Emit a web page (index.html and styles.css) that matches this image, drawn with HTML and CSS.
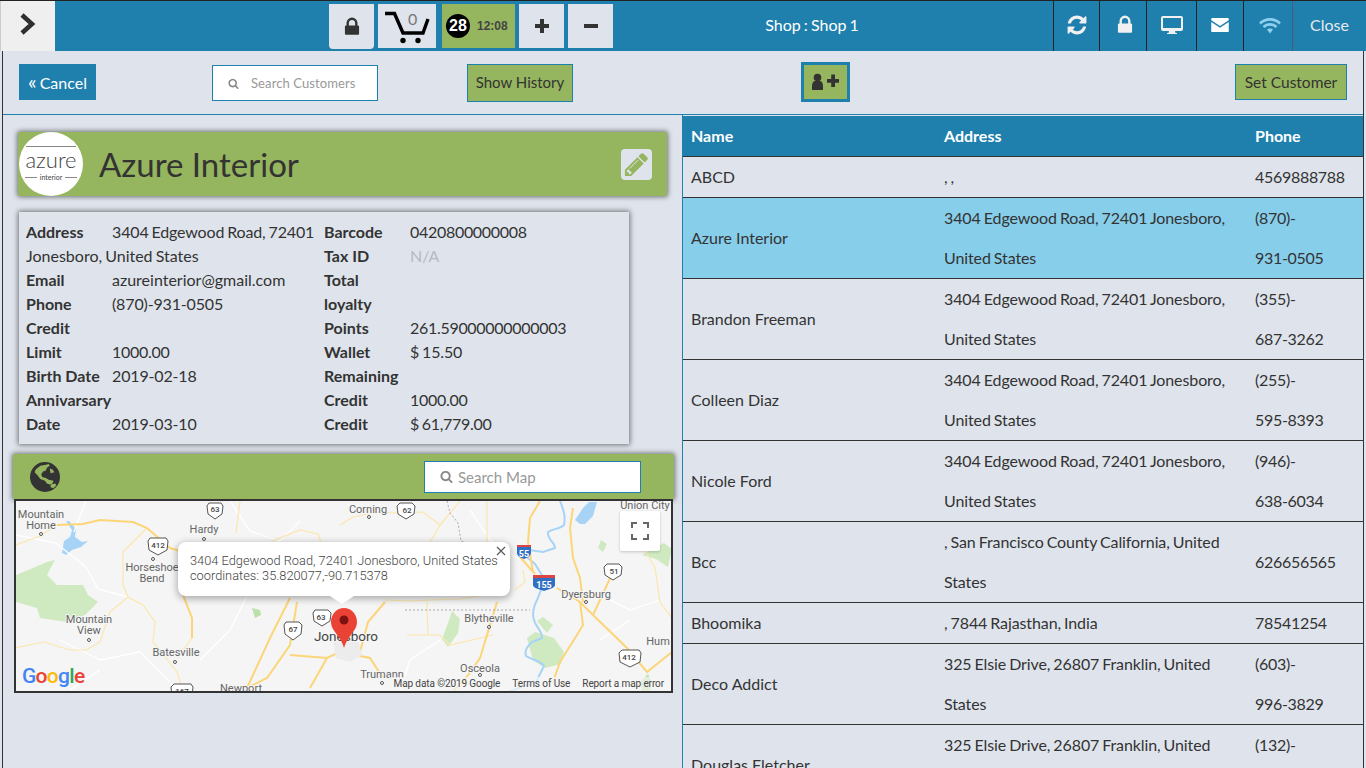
FILE: index.html
```html
<!DOCTYPE html>
<html lang="en">
<head>
  <meta charset="UTF-8" />
  <title>Shop 1</title>
  <link rel="stylesheet" href="styles.css">
</head>
<body>
  <header class="topbar">
    <button class="toggle">
      <svg width="18" height="24" viewBox="0 0 18 24"><path d="M3 3l10 9-10 9" fill="none" stroke="#2f2f2f" stroke-width="4.5"/></svg>
    </button>
    <div class="tools">
      <div class="tool tool-lock">
        <svg class="ico" width="22" height="22" viewBox="0 0 1792 1792"><path fill="#333" d="M640 768h512v-192q0-106-75-181t-181-75-181 75-75 181v192zm832 96v576q0 40-28 68t-68 28h-960q-40 0-68-28t-28-68v-576q0-40 28-68t68-28h32v-192q0-184 132-316t316-132 316 132 132 316v192h32q40 0 68 28t28 68z"/></svg>
      </div>
      <div class="tool tool-cart">
        <svg width="50" height="42" viewBox="0 0 50 42">
          <path d="M3 8.500h9.500L21 28h20l5-14" fill="none" stroke="#000" stroke-width="3.400"/>
          <circle cx="21" cy="35.500" r="2.700" fill="#000"/><circle cx="36" cy="35.500" r="2.700" fill="#000"/>
        </svg>
        <span class="cart-count">0</span>
      </div>
      <div class="tool tool-timer"><span class="badge">28</span><span class="clock">12:08</span></div>
      <div class="tool tool-step">
        <svg width="16" height="16" viewBox="0 0 16 16"><path d="M6 1h4v5h5v4h-5v5H6v-5H1V6h5z" fill="#333"/></svg>
      </div>
      <div class="tool tool-step">
        <svg width="16" height="16" viewBox="0 0 16 16"><path d="M1 6h14v4H1z" fill="#333"/></svg>
      </div>
    </div>
    <div class="shop-name">Shop : Shop 1</div>
    <div class="status">
      <div class="status-cell w46">
        <svg width="22" height="22" viewBox="0 0 1792 1792"><path fill="#f0f0f0" d="M1639 1056q0 5-1 7-64 268-268 434.5t-478 166.5q-146 0-282.5-55t-243.5-157l-129 129q-19 19-45 19t-45-19-19-45v-448q0-26 19-45t45-19h448q26 0 45 19t19 45-19 45l-137 137q71 66 161 102t187 36q134 0 250-65t186-179q11-17 53-117 8-23 30-23h192q13 0 22.5 9.5t9.5 22.5zm25-800v448q0 26-19 45t-45 19h-448q-26 0-45-19t-19-45 19-45l138-138q-148-137-349-137-134 0-250 65t-186 179q-11 17-53 117-8 23-30 23h-199q-13 0-22.5-9.5t-9.5-22.5v-7q65-268 270-434.5t480-166.5q146 0 284 55.5t245 156.5l130-129q19-19 45-19t45 19 19 45z"/></svg>
      </div>
      <div class="status-cell w47 nudge">
        <svg width="22" height="22" viewBox="0 0 1792 1792"><path fill="#f0f0f0" d="M640 768h512v-192q0-106-75-181t-181-75-181 75-75 181v192zm832 96v576q0 40-28 68t-68 28h-960q-40 0-68-28t-28-68v-576q0-40 28-68t68-28h32v-192q0-184 132-316t316-132 316 132 132 316v192h32q40 0 68 28t28 68z"/></svg>
      </div>
      <div class="status-cell w50">
        <svg width="22" height="18" viewBox="0 0 22 18"><path fill="#f0f0f0" d="M2 0h18a2 2 0 0 1 2 2v11a2 2 0 0 1-2 2h-6l.5 2H16v1H6v-1h1.500L8 15H2a2 2 0 0 1-2-2V2a2 2 0 0 1 2-2zm0 2v10h18V2z"/></svg>
      </div>
      <div class="status-cell w47">
        <svg width="18" height="14" viewBox="0 0 20 16"><path fill="#fff" d="M1 0h18a1 1 0 0 1 1 1v1.600l-10 6.600L0 2.600V1a1 1 0 0 1 1-1zM0 4.600l10 6.600 10-6.600V15a1 1 0 0 1-1 1H1a1 1 0 0 1-1-1z"/></svg>
      </div>
      <div class="status-cell w49 nudge-small">
        <svg width="22" height="17" viewBox="0 0 22 17"><path fill="none" stroke="#8fd0ee" stroke-width="2.600" d="M1 6.500c5.500-5.500 14.500-5.500 20 0M4.500 10c3.500-3.500 9.500-3.500 13 0"/><path fill="#8fd0ee" d="M8 12.500c1.700-1.500 4.300-1.500 6 0l-3 4z"/></svg>
      </div>
      <div class="status-cell close">Close</div>
    </div>
  </header>

  <main class="screen">
    <div class="toolbar">
      <button class="btn btn-cancel"><span class="chev">«</span>Cancel</button>
      <label class="search search-customers">
        <svg width="11" height="11" viewBox="0 0 1792 1792"><path fill="#888" d="M1216 832q0-185-131.500-316.500t-316.500-131.500-316.500 131.500-131.500 316.500 131.500 316.500 316.500 131.500 316.500-131.500 131.500-316.500zm512 832q0 52-38 90t-90 38q-54 0-90-38l-343-342q-179 124-399 124-143 0-273.500-55.500t-225-150-150-225-55.500-273.500 55.500-273.500 150-225 225-150 273.500-55.500 273.500 55.500 225 150 150 225 55.500 273.500q0 220-124 399l343 343q37 37 37 90z"/></svg>
        <span>Search Customers</span>
      </label>
      <button class="btn btn-green btn-history">Show History</button>
      <button class="btn-add">
        <svg width="28" height="18" viewBox="0 0 28 18"><circle cx="5.500" cy="4.500" r="3.800" fill="#333"/><path d="M0 17v-4c0-3 1.500-5 3-5h5c1.500 0 3 2 3 5v4z" fill="#333"/><path d="M15 6h4.200V1.500h3.800V6H27v3.800h-4V14h-3.800V9.800H15z" fill="#333"/></svg>
      </button>
      <button class="btn btn-green btn-set">Set Customer</button>
    </div>

    <div class="columns">
      <section class="detail">
        <div class="partner-head">
          <div class="logo">
            <div class="logo-rule"></div>
            <div class="logo-name">azure</div>
            <div class="logo-sub">interior</div>
          </div>
          <h1>Azure Interior</h1>
          <div class="edit">
            <svg width="27" height="27" viewBox="0 0 1792 1792"><path fill="#95b55e" d="M491 1536l91-91-235-235-91 91v107h128v128h107zm523-928q0-22-22-22-10 0-17 7l-542 542q-7 7-7 17 0 22 22 22 10 0 17-7l542-542q7-7 7-17zm-54-192l416 416-832 832h-416v-416zm683 96q0 53-37 90l-166 166-416-416 166-165q36-38 90-38 53 0 91 38l235 234q37 39 37 91z"/></svg>
          </div>
        </div>

        <div class="info-card">
          <div class="info-col">
            <div class="line"><b>Address</b><span class="d">3404 Edgewood Road, 72401</span></div>
            <div class="line">Jonesboro, United States</div>
            <div class="line"><b>Email</b>azureinterior@gmail.com</div>
            <div class="line"><b>Phone</b><span class="d">(870)-931-0505</span></div>
            <div class="line"><b>Credit</b></div>
            <div class="line"><b>Limit</b><span class="n">1000.00</span></div>
            <div class="line"><b>Birth Date</b><span class="d">2019-02-18</span></div>
            <div class="line"><b>Annivarsary</b></div>
            <div class="line"><b>Date</b><span class="d">2019-03-10</span></div>
          </div>
          <div class="info-col">
            <div class="line"><b>Barcode</b><span class="n">0420800000008</span></div>
            <div class="line"><b>Tax ID</b><span class="na">N/A</span></div>
            <div class="line"><b>Total</b></div>
            <div class="line"><b>loyalty</b></div>
            <div class="line"><b>Points</b><span class="n">261.59000000000003</span></div>
            <div class="line"><b>Wallet</b><span class="d">$ 15.50</span></div>
            <div class="line"><b>Remaining</b></div>
            <div class="line"><b>Credit</b><span class="n">1000.00</span></div>
            <div class="line"><b>Credit</b><span class="n">$ 61,779.00</span></div>
          </div>
        </div>

        <div class="map-head">
          <svg class="globe" width="30" height="30" viewBox="0 0 32 32">
            <circle cx="16" cy="16" r="16" fill="#333"/>
            <path fill="#95b55e" d="M6 8l5-4 6-1 4 1-3 2-1 3-3 1-2 3 1 3 4 1 3 2 5 1-1 3-3 1-3-1-2-3-5-2-3-4-3-3zM22 24l5-1 1 2-3 3-3-1zM21 7l3 1 2 3-4 1zM17 3l3-1 1 2-3 1z"/>
          </svg>
          <label class="search search-map">
            <svg width="13" height="13" viewBox="0 0 1792 1792"><path fill="#888" d="M1216 832q0-185-131.500-316.500t-316.500-131.500-316.500 131.500-131.500 316.500 131.500 316.500 316.500 131.500 316.500-131.500 131.500-316.500zm512 832q0 52-38 90t-90 38q-54 0-90-38l-343-342q-179 124-399 124-143 0-273.500-55.500t-225-150-150-225-55.500-273.500 55.500-273.500 150-225 225-150 273.500-55.500 273.500 55.500 225 150 150 225 55.500 273.500q0 220-124 399l343 343q37 37 37 90z"/></svg>
            <span>Search Map</span>
          </label>
        </div>

        <div class="map">
          <svg class="map-svg" width="655" height="190" viewBox="16 501 655 190">
            <rect x="16" y="501" width="656" height="190" fill="#f5f5f5"/>
            <!-- parks -->
            <path fill="#cfeac1" d="M16 575l17-7 14-6 8-2-8 15 10 10h26l5 10 10 7-13 13-18 7-27-4-3-10-21-6z"/>
            <path fill="#cfeac1" d="M535 632l-8 6 6 22 12 8 16-4 3-12-10-14zM543 617l-6 4 10 12 6-8zM452 611l-4 12-6 16 6 8 10-14 2-14zM642 555l22-12 8 6-4 18-12-8zM601 540l-3 8 5 4 4-8z"/>
            <path fill="#bbe0a9" d="M252 608l8 2 1 5-6 3zM640 682l8-8 4 10-2 7h-8z"/>
            <!-- water -->
            <path fill="#a7d3f7" d="M62 553l2-12 6-4 2-7-6-9 3 0 7 8-1 8 7 5 6-1-7 6-9 3-6 5zM575 520l8-12 6-6h8l-4 14-8 8-5 0z"/>
            <path fill="none" stroke="#a7d3f7" stroke-width="2" d="M560 501c3 8 6 14 4 24-4 4-12 4-16 7-1 8 7 10 7 16l-12 4-14-2-10 0c6 6 12 10 16 14l10 16-8 20c-4 8-5 14-3 20 2 8 8 10 8 18l-10 4c-4 4-8 8-6 14 6 4 14 4 18 10l-8 16-12 4-16 6-16 4-14 6-10 0"/>
            <!-- minor roads -->
            <g fill="none" stroke="#fff" stroke-width="1.300">
              <path d="M16 535l40 8 30 24 12 22 30 8M86 500l-12 32M60 640l40 20 40-8 30 30M200 660l30-30 20-40M440 640l-30 20-10 30M470 510l20 30 30 20M590 590l40 20 30-10M600 640l30-20M230 501l20 30 30 10 20-20M100 670l-30 20"/>
            </g>
            <!-- state and county roads -->
            <g fill="none" stroke="#fde6ad" stroke-width="1.200">
              <path d="M16 545l24-9 17-11M147 528l-24 24v33l5 12 15 8 12 17-2 20 24 30 6 18M128 597l-18 15-10 30-14 8-16 0-26-8-30 6M183 595l9 23v20l-15 20M407 635h33l10 10 43-10M427 602l1 33M353 517l24-5 20 1 26-1 17 13-10 17M440 525l20-24M487 501v41M340 525l13-8M240 501l-4 32M270 542l30-12 18 4 7 20M640 542l15 26 5 34 12 16M385 600l25 1 20-1 30-1 30-5 20-8M515 590l10-8-2-12"/>
            </g>
            <!-- highways -->
            <g fill="none" stroke="#fdd579" stroke-width="2">
              <path d="M57 525l26-1 17-4 33 2 14 6 23 20 10 3M183 595l9 23v20M290 598l-20 40-23 50M297 602l-7 43-23 33-20 10M290 655l37 3 13-6M327 658l-17 30M340 652l30 6 13 20M385 602l-17 20-8 30M497 602l-10 33-7 23-17 24-10 9M540 501l-10 17-2 24 5 30M520 557l15 17M557 588l23 14 13 13 34 33 20 24 25-20M580 602l3 23-6 10-17 27-7 20M573 508l-3 20 3 30 7 20 3 24M613 572l-20 43"/>
            </g>
            <path fill="none" stroke="#888" stroke-width="0.700" stroke-dasharray="2 2" d="M405 610h125M447 501l3 12 8 10 3 18 10 4"/>
            <!-- city blocks -->
            <path fill="#ececec" d="M333 642l16-4 10 5 3 12-12 7-14-4z"/>
            <!-- shields -->
            <g class="shield"><path d="M209 503h12l2 3-1 8-7 5-7-5-1-8z"/><text x="215" y="512">63</text></g>
            <g class="shield"><path d="M150 538h16l2 3-1 9-9 5-9-5-1-9z"/><text x="158" y="548">412</text></g>
            <g class="shield"><path d="M400 503h12l3 3-1 8-8 5-8-5-1-8z"/><text x="407" y="513">62</text></g>
            <g class="shield"><path d="M286 622h13l3 3-1 9-8 6-8-6-1-9z"/><text x="293" y="632">67</text></g>
            <g class="shield"><path d="M315 610h13l3 3-1 8-8 5-8-5-1-8z"/><text x="321" y="620">63</text></g>
            <g class="shield"><path d="M607 564h12l3 3-1 8-8 5-8-5-1-8z"/><text x="614" y="574">51</text></g>
            <g class="shield"><path d="M622 650h17l2 3-1 9-10 5-10-5-1-9z"/><text x="629" y="660">412</text></g>
            <g class="shield"><path d="M174 684h17l2 3-1 9-10 5-10-5-1-9z"/><text x="182" y="694">167</text></g>
            <g class="shield-i">
              <path fill="#2f6fc4" d="M517 546h14v7c0 3-4 5-7 6-3-1-7-3-7-6z"/><path fill="#d44" d="M517 545h14v2h-14z"/>
              <text x="524" y="557">55</text>
              <path fill="#2f6fc4" d="M533 576h22v9c0 3-6 4-11 6-5-2-11-3-11-6z"/><path fill="#d44" d="M533 575h22v3h-22z"/>
              <text x="544" y="588">155</text>
            </g>
            <!-- towns -->
            <g class="town">
              <text x="41" y="518">Mountain</text><text x="41" y="529">Home</text>
              <text x="204" y="533">Hardy</text>
              <text x="152" y="571">Horseshoe</text><text x="152" y="582">Bend</text>
              <text x="89" y="623">Mountain</text><text x="89" y="634">View</text>
              <text x="176" y="656">Batesville</text>
              <text x="241" y="692">Newport</text>
              <text x="297" y="550">Pocahontas</text>
              <text x="368" y="513">Corning</text>
              <text x="645" y="509">Union City</text>
              <text x="586" y="598">Dyersburg</text>
              <text x="489" y="622">Blytheville</text>
              <text x="480" y="672">Osceola</text>
              <text x="382" y="678">Trumann</text>
              <text x="658" y="645">Hum</text>
            </g>
            <text class="town-big" x="346" y="641">Jonesboro</text>
            <g fill="#fff" stroke="#555" stroke-width="1">
              <circle cx="41" cy="534" r="1.500"/><circle cx="204" cy="539" r="1.500"/><circle cx="153" cy="559" r="1.500"/><circle cx="89" cy="640" r="1.500"/><circle cx="175" cy="662" r="1.500"/><circle cx="369" cy="517" r="1.500"/><circle cx="586" cy="602" r="1.500"/><circle cx="489" cy="627" r="1.500"/><circle cx="480" cy="675" r="1.500"/><circle cx="382" cy="683" r="1.500"/>
            </g>
            <!-- pin -->
            <path fill="#ea4335" d="M344 648c-2-7-5-10-9-16-3-4-4-7-4-10 0-8 6-14 13-14s13 6 13 14c0 3-1 6-4 10-4 6-7 9-9 16z"/>
            <circle cx="344" cy="620" r="4.500" fill="#7d1212"/>
          </svg>

          <button class="fullscreen">
            <svg width="18" height="18" viewBox="0 0 18 18"><path d="M0 6V0h6v2H2v4zM12 0h6v6h-2V2h-4zM18 12v6h-6v-2h4v-4zM6 18H0v-6h2v4h4z" fill="#666"/></svg>
          </button>

          <div class="popup">
            <div>3404 Edgewood Road, 72401 Jonesboro, United States</div>
            <div>coordinates: 35.820077,-90.715378</div>
            <svg class="popup-close" width="10" height="10" viewBox="0 0 10 10"><path d="M1 1l8 8M9 1L1 9" stroke="#555" stroke-width="1.100"/></svg>
          </div>

          <div class="google"><i class="g-b">G</i><i class="g-r">o</i><i class="g-y">o</i><i class="g-b">g</i><i class="g-g">l</i><i class="g-r">e</i></div>
          <div class="attrib"><span>Map data ©2019 Google</span><span>Terms of Use</span><span>Report a map error</span></div>
        </div>
      </section>

      <section class="customers">
        <table>
          <thead>
            <tr><th class="c-name">Name</th><th class="c-addr">Address</th><th class="c-phone">Phone</th></tr>
          </thead>
          <tbody>
            <tr><td>ABCD</td><td>, ,</td><td>4569888788</td></tr>
            <tr class="selected"><td>Azure Interior</td><td>3404 Edgewood Road, 72401 Jonesboro, United States</td><td>(870)-<br>931-0505</td></tr>
            <tr><td>Brandon Freeman</td><td>3404 Edgewood Road, 72401 Jonesboro, United States</td><td>(355)-<br>687-3262</td></tr>
            <tr><td>Colleen Diaz</td><td>3404 Edgewood Road, 72401 Jonesboro, United States</td><td>(255)-<br>595-8393</td></tr>
            <tr><td>Nicole Ford</td><td>3404 Edgewood Road, 72401 Jonesboro, United States</td><td>(946)-<br>638-6034</td></tr>
            <tr><td>Bcc</td><td>, San Francisco County California, United States</td><td>626656565</td></tr>
            <tr><td>Bhoomika</td><td>, 7844 Rajasthan, India</td><td>78541254</td></tr>
            <tr><td>Deco Addict</td><td>325 Elsie Drive, 26807 Franklin, United States</td><td>(603)-<br>996-3829</td></tr>
            <tr><td>Douglas Fletcher</td><td>325 Elsie Drive, 26807 Franklin, United States</td><td>(132)-<br>553-7242</td></tr>
          </tbody>
        </table>
      </section>
    </div>
  </main>
</body>
</html>
```

FILE: styles.css
```css
* {
  box-sizing: border-box;
}
html, body {
  height: 100%;
}
body {
  margin: 0;
  overflow: hidden;
  font-family: Lato, sans-serif;
  font-size: 16px;
  color: #333;
  background: #dfe4ec;
}
button {
  font-family: inherit;
  cursor: pointer;
}

/* top bar */
.topbar {
  display: flex;
  align-items: stretch;
  height: 51px;
  background: #1f80ae;
  border-top: 1px solid #222;
}
.toggle {
  width: 55px;
  padding: 0 0 2px;
  background: #efefef;
  border: 0;
  border-left: 1px solid #ccc;
}
.tools {
  display: flex;
  gap: 4px;
  margin-left: 274px;
  padding-top: 3px;
}
.tool {
  display: flex;
  align-items: center;
  justify-content: center;
  height: 44px;
  background: #dfe4ec;
}
.tool-lock {
  width: 45px;
  height: 45px;
  border-radius: 0 0 4px 4px;
}
.tool-cart {
  position: relative;
  width: 58px;
}
.cart-count {
  position: absolute;
  top: 5px;
  left: 30px;
  color: #777;
  font-size: 16px;
}
.tool-timer {
  width: 73px;
  margin-left: 2px;
  gap: 7px;
  justify-content: flex-start;
  padding-left: 4px;
  background: #95b55e;
}
.badge {
  width: 24px;
  height: 24px;
  border-radius: 50%;
  background: #000;
  color: #fff;
  font-family: "Liberation Sans", sans-serif;
  font-size: 16px;
  font-weight: bold;
  line-height: 24px;
  text-align: center;
}
.clock {
  font-family: "Liberation Sans", sans-serif;
  font-size: 12px;
  font-weight: bold;
  color: #444;
}
.tool-step {
  width: 45px;
}
.shop-name {
  width: 398px;
  color: #fff;
  text-align: center;
  line-height: 47px;
  word-spacing: -1px;
}
.status {
  display: flex;
  margin-left: auto;
  color: #fff;
}
.status-cell {
  display: flex;
  align-items: center;
  justify-content: center;
  padding-bottom: 2px;
  border-left: 1px solid #222;
}
.w46 { width: 46px; }
.w47 { width: 47px; }
.w50 { width: 50px; }
.w49 { width: 49px; }
.nudge {
  padding-left: 4px;
}
.nudge-small {
  padding-left: 3px;
}
.close {
  width: 74px;
  padding-bottom: 4px;
  color: #e6e9ee;
  font-size: 16px;
  border-left-color: #4a5a78;
}

/* toolbar */
.screen {
  height: 717px;
  overflow: hidden;
  border-left: 1px solid #333;
  margin-left: 2px;
  margin-right: 2px;
  border-right: 1px solid #333;
}
.toolbar {
  display: flex;
  align-items: flex-start;
  height: 64px;
  padding: 13px 16px 0 16px;
  border-bottom: 1px solid #1f80ae;
}
.btn {
  height: 36px;
  padding: 0;
  border: 1px solid #1f80ae;
  font-size: 15px;
  color: #333;
}
.btn-cancel {
  width: 77px;
  background: #1f80ae;
  color: #fff;
  font-size: 16px;
}
.chev {
  margin-right: 3px;
  font-size: 20px;
  line-height: 16px;
}
.search {
  display: flex;
  align-items: center;
  background: #fff;
  border: 1px solid #1f80ae;
  color: #999;
}
.search-customers {
  width: 166px;
  height: 36px;
  margin: 1px 0 0 116px;
  padding-left: 15px;
  gap: 12px;
  font-size: 13px;
  letter-spacing: 0.1px;
}
.btn-green {
  background: #95b55e;
}
.btn-history {
  width: 106px;
  height: 38px;
  margin-left: 89px;
  padding-bottom: 2px;
}
.btn-add {
  display: flex;
  align-items: center;
  justify-content: center;
  width: 49px;
  height: 40px;
  margin: -2px 0 0 228px;
  padding: 0;
  background: #95b55e;
  border: 3px solid #1f80ae;
}
.btn-set {
  width: 112px;
  margin-left: auto;
  font-size: 15.500px;
}

/* columns */
.columns {
  display: flex;
  align-items: flex-start;
}
.detail {
  width: 679px;
  padding: 17px 0 0 10px;
}
.partner-head {
  display: flex;
  align-items: center;
  width: 649px;
  height: 64px;
  margin-left: 5px;
  background: #95b55e;
  border-radius: 2px;
  box-shadow: 0 0 5px 1px rgba(0, 0, 0, 0.5);
}
.logo {
  display: flex;
  flex-direction: column;
  align-items: center;
  justify-content: center;
  width: 64px;
  height: 64px;
  margin-left: 1px;
  border-radius: 50%;
  background: #fff;
  color: #444;
}
.logo-rule {
  width: 50px;
  border-top: 1px solid #888;
}
.logo-name {
  font-size: 22px;
  font-weight: 300;
  line-height: 26px;
}
.logo-sub {
  display: flex;
  align-items: center;
  gap: 3px;
  font-size: 7px;
  line-height: 9px;
}
.logo-sub::before, .logo-sub::after {
  content: "";
  width: 12px;
  border-top: 1px solid #888;
}
.partner-head h1 {
  flex: 1;
  margin: 0 0 0 16px;
  font-size: 33px;
  font-weight: 400;
  color: #333;
}
.edit {
  display: flex;
  align-items: center;
  justify-content: center;
  width: 31px;
  height: 31px;
  margin-right: 15px;
  background: #dfe4ec;
  border-radius: 4px;
}
.info-card {
  display: flex;
  width: 610px;
  height: 232px;
  margin: 16px 0 0 6px;
  padding: 8px 7px;
  box-shadow: 0 0 5px 1px rgba(0, 0, 0, 0.5);
}
.info-col {
  width: 298px;
}
.line {
  height: 24px;
  line-height: 24px;
  white-space: nowrap;
  word-spacing: -1px;
}
.line b {
  display: inline-block;
  width: 86px;
  word-spacing: 0;
}
.n {
  letter-spacing: -0.3px;
}
.d {
  letter-spacing: -0.15px;
}
.na {
  color: #b4bac2;
}

/* map */
.map-head {
  display: flex;
  align-items: center;
  justify-content: space-between;
  width: 661px;
  height: 45px;
  margin-top: 10px;
  padding: 0 33px 0 17px;
  background: #95b55e;
  border-radius: 2px 2px 0 0;
  box-shadow: 0 0 5px 1px rgba(0, 0, 0, 0.5);
}
.search-map {
  width: 217px;
  height: 32px;
  padding-left: 15px;
  gap: 5px;
  font-size: 15px;
}
.map {
  position: relative;
  width: 659px;
  height: 194px;
  margin-left: 1px;
  overflow: hidden;
  background: #f5f5f5;
  border: 2px solid #333;
}
.map-svg {
  display: block;
  font-family: Roboto, sans-serif;
}
.town text, .town-big {
  font-size: 11px;
  fill: #666;
  text-anchor: middle;
  paint-order: stroke;
  stroke: #f5f5f5;
  stroke-width: 2px;
}
.town-big {
  font-size: 13.500px;
  fill: #444;
}
.shield path {
  fill: #fff;
  stroke: #555;
}
.shield text {
  font-size: 8px;
  font-weight: 500;
  fill: #444;
  text-anchor: middle;
}
.shield-i text {
  font-size: 9px;
  font-weight: bold;
  fill: #fff;
  text-anchor: middle;
}
.fullscreen {
  position: absolute;
  top: 10px;
  right: 11px;
  display: flex;
  align-items: center;
  justify-content: center;
  width: 40px;
  height: 40px;
  padding: 0;
  background: #fff;
  border: 0;
  border-radius: 2px;
  box-shadow: 0 1px 3px rgba(0, 0, 0, 0.2);
}
.popup {
  position: absolute;
  top: 41px;
  left: 162px;
  width: 332px;
  height: 54px;
  padding: 11px 12px;
  background: #fff;
  border-radius: 8px;
  box-shadow: 0 2px 7px 1px rgba(0, 0, 0, 0.3);
  font-family: Roboto, sans-serif;
  font-size: 12.800px;
  font-weight: 300;
  line-height: 15px;
  color: #444;
  white-space: nowrap;
}
.popup::after {
  content: "";
  position: absolute;
  left: 152px;
  bottom: -8px;
  border-top: 8px solid #fff;
  border-left: 12px solid transparent;
  border-right: 12px solid transparent;
}
.popup-close {
  position: absolute;
  top: 4px;
  right: 4px;
}
.google {
  position: absolute;
  left: 6px;
  bottom: 3px;
  font-family: Roboto, sans-serif;
  font-size: 21px;
  font-weight: 500;
  line-height: 24px;
  letter-spacing: -0.7px;
}
.google i {
  font-style: normal;
}
.g-b { color: #4285f4; }
.g-r { color: #ea4335; }
.g-y { color: #fbbc05; }
.g-g { color: #34a853; }
.attrib {
  position: absolute;
  right: 0;
  bottom: 0;
  display: flex;
  gap: 12px;
  height: 14px;
  padding: 0 7px 0 5px;
  background: rgba(245, 245, 245, 0.7);
  font-family: Roboto, sans-serif;
  font-size: 10px;
  letter-spacing: -0.1px;
  line-height: 14px;
  color: #444;
}

/* customer table */
.customers {
  flex: 1;
  height: 653px;
  overflow: hidden;
  border-left: 1px solid #1f80ae;
  padding-top: 1px;
}
table {
  width: 100%;
  table-layout: fixed;
  border-collapse: collapse;
}
th {
  height: 40px;
  padding: 0 8px;
  background: #1f80ae;
  color: #fff;
  font-size: 16px;
  text-align: left;
}
.c-name { width: 253px; }
.c-addr { width: 311px; }
td {
  padding: 0 8px;
  line-height: 40px;
  border-top: 1px solid #333;
  border-bottom: 1px solid #333;
  font-size: 16px;
}
td:nth-child(2) {
  word-spacing: -1px;
  letter-spacing: -0.1px;
}
td:last-child {
  letter-spacing: -0.3px;
}
.selected td {
  background: #87ceeb;
}
```
